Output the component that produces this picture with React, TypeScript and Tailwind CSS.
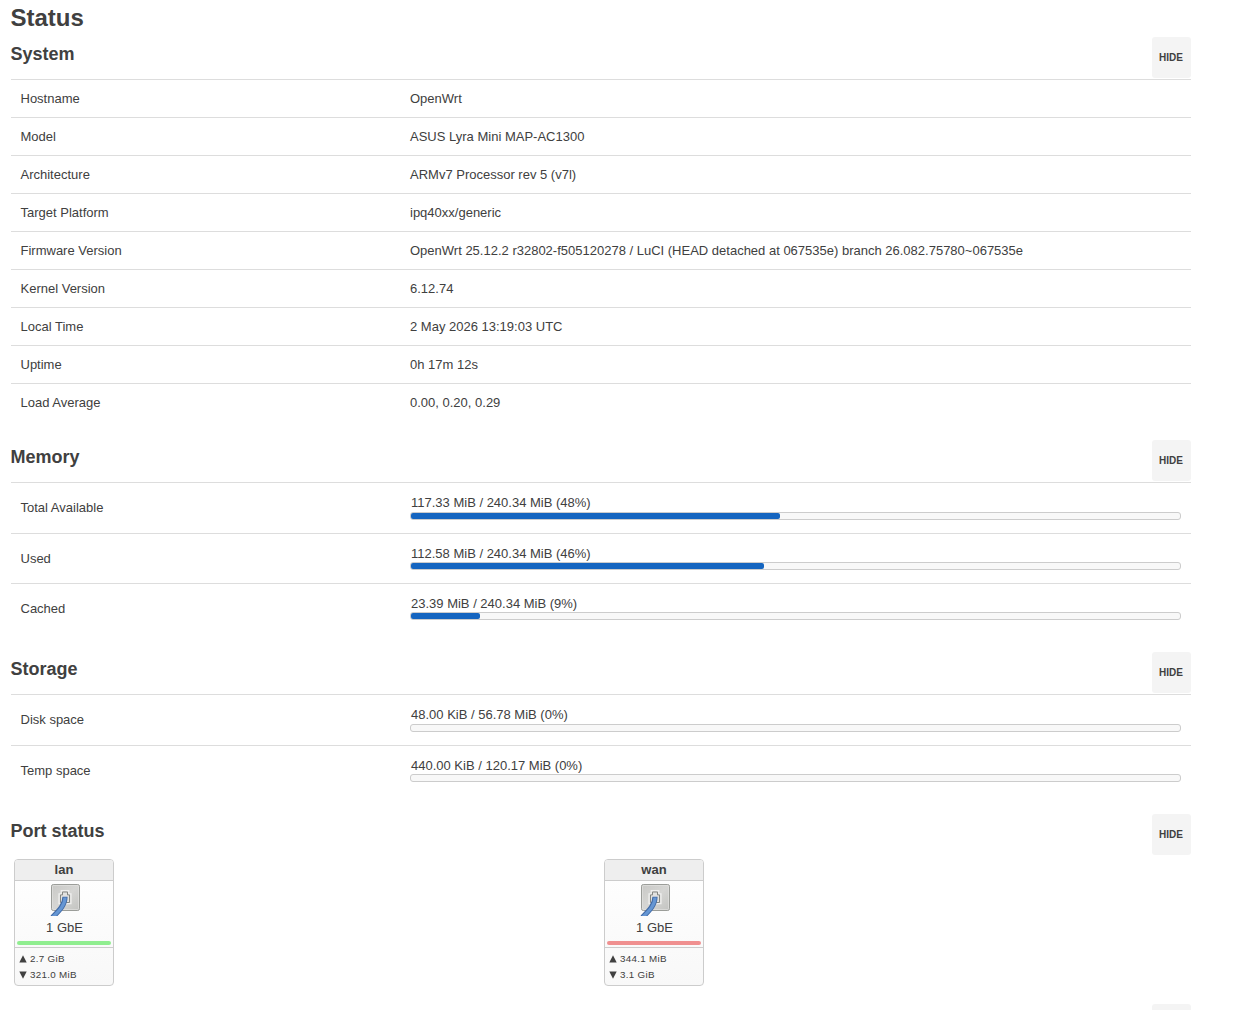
import React, { ReactNode } from "react";

const systemInfo = [
	["Hostname", "OpenWrt"],
	["Model", "ASUS Lyra Mini MAP-AC1300"],
	["Architecture", "ARMv7 Processor rev 5 (v7l)"],
	["Target Platform", "ipq40xx/generic"],
	[
		"Firmware Version",
		"OpenWrt 25.12.2 r32802-f505120278 / LuCI (HEAD detached at 067535e) branch 26.082.75780~067535e",
	],
	["Kernel Version", "6.12.74"],
	["Local Time", "2 May 2026 13:19:03 UTC"],
	["Uptime", "0h 17m 12s"],
	["Load Average", "0.00, 0.20, 0.29"],
];

const memory = [
	{ label: "Total Available", text: "117.33 MiB / 240.34 MiB (48%)", percent: 48 },
	{ label: "Used", text: "112.58 MiB / 240.34 MiB (46%)", percent: 46 },
	{ label: "Cached", text: "23.39 MiB / 240.34 MiB (9%)", percent: 9 },
];

const storage = [
	{ label: "Disk space", text: "48.00 KiB / 56.78 MiB (0%)", percent: 0 },
	{ label: "Temp space", text: "440.00 KiB / 120.17 MiB (0%)", percent: 0 },
];

const App = () => {
	return (
		<div className="h-[1010px] overflow-hidden bg-white pl-[11px] font-['Liberation_Sans',Arial,sans-serif] text-[13px] leading-[18px] text-[#404040]">
			<div className="w-[1180px]">
				<h2 className="-ml-[0.5px] h-[37px] text-[24px] leading-[36px] font-bold">
					Status
				</h2>
				<Section title="System">
					{systemInfo.map(([label, value]) => (
						<div
							key={label}
							className="flex h-[38px] items-center border-t border-[#ddd]"
						>
							<div className="w-[399px] pl-[9.5px]">{label}</div>
							<div>{value}</div>
						</div>
					))}
				</Section>
				<Section title="Memory">
					{memory.map((item) => (
						<UsageRow key={item.label} {...item} />
					))}
				</Section>
				<Section title="Storage">
					{storage.map((item) => (
						<UsageRow key={item.label} {...item} />
					))}
				</Section>
				<Section title="Port status">
					<div className="flex h-[129px] pt-[3px] pl-[3px]">
						<div className="w-[590px]">
							<Port name="lan" bar="bg-[#90ee90]" tx="2.7 GiB" rx="321.0 MiB" />
						</div>
						<Port name="wan" bar="bg-[#f09090]" tx="344.1 MiB" rx="3.1 GiB" />
					</div>
				</Section>
				{/* top edge of the next section's button */}
				<div className="flex justify-end">
					<div className="h-[6px] w-[39px] rounded-t-[3px] bg-[#f4f4f4]"></div>
				</div>
			</div>
		</div>
	);
};

const Section = ({ title, children }: { title: string; children: ReactNode }) => {
	return (
		<section className="mb-[19px]">
			<div className="flex h-[42px] items-start justify-between">
				<h3 className="-ml-[0.5px] text-[18px] leading-[34px] font-bold">
					{title}
				</h3>
				<button className="h-[41px] w-[39px] rounded-[3px] bg-[#f4f4f4] pr-px text-center text-[10px] font-bold">
					HIDE
				</button>
			</div>
			{children}
		</section>
	);
};

const UsageRow = ({
	label,
	text,
	percent,
}: {
	label: string;
	text: string;
	percent: number;
}) => {
	return (
		<div className="group flex h-[50px] border-t border-[#ddd] nth-2:h-[51px]">
			<div className="w-[399px] pt-[16px] pl-[9.5px]">{label}</div>
			<div className="w-[771px]">
				<div className="h-[28px] pt-[11px] pl-px group-nth-2:h-[29px]">
					{text}
				</div>
				<div className="h-2 rounded-[3px] border border-[#ccc] bg-[#f8f8f8]">
					<div
						className="h-full rounded-[2px] bg-[#1565c0]"
						style={{ width: `calc(${percent}% - 0.3px)` }}
					></div>
				</div>
			</div>
		</div>
	);
};

const Port = ({
	name,
	bar,
	tx,
	rx,
}: {
	name: string;
	bar: string;
	tx: string;
	rx: string;
}) => {
	return (
		<div className="h-[127px] w-[100px] rounded-[4px] border border-[#ccc] bg-linear-to-b from-white to-[#f8f8f8]">
			<div className="h-[21px] rounded-t-[3px] border-b border-[#ccc] bg-[#eee] text-center leading-[20px] font-bold">
				{name}
			</div>
			<div className="flex h-[67px] flex-col items-center border-b border-[#ccc] pt-[3px]">
				<PortIcon />
				<div className="h-[22px] pt-px pl-px leading-[22px]">1 GbE</div>
				<div className={`mt-[3px] h-1 w-[94px] rounded-[2px] ${bar}`}></div>
			</div>
			<div className="pt-[3px] pl-1 text-[9.8px] leading-[16px] tracking-[0.3px]">
				<div className="flex items-center gap-[3px]">
					<Arrow /> {tx}
				</div>
				<div className="flex items-center gap-[3px]">
					<Arrow down /> {rx}
				</div>
			</div>
		</div>
	);
};

const Arrow = ({ down }: { down?: boolean }) => {
	return (
		<svg width={8} height={8} viewBox="0 0 8 8">
			<path fill="#404040" d={down ? "M.3.5h7.4L4 7.7z" : "M4 .3 7.7 7.5H.3z"} />
		</svg>
	);
};

const PortIcon = () => {
	return (
		<svg className="ml-0.5" width={32} height={32} viewBox="0 0 32 32">
			<defs>
				<linearGradient id="plate" x1="0" y1="0" x2="1" y2="1">
					<stop offset="0" stopColor="#c8c8c5" />
					<stop offset=".5" stopColor="#d6d6d4" />
					<stop offset="1" stopColor="#c2c3c0" />
				</linearGradient>
			</defs>
			<rect
				x="2.5"
				y=".5"
				width="28"
				height="26"
				rx="1.8"
				fill="url(#plate)"
				stroke="#9b9d99"
			/>
			<rect
				x="3.5"
				y="1.5"
				width="26"
				height="24"
				rx="1"
				fill="none"
				stroke="#e4e4e2"
				strokeOpacity=".6"
			/>
			<path
				d="M10 19.7V9.8h2.2V6.7h7.6v3.1H22v9.9z"
				fill="#d6d6d4"
				stroke="#f0f0ef"
				strokeWidth="1.2"
			/>
			<path
				d="M11.5 18.5v-7.6h2V8h5v2.9h2v7.6z"
				fill="#e2e2e0"
				stroke="#858783"
			/>
			<path
				d="M16 12.8C16 21 10.5 26.5 3.4 33.4"
				fill="none"
				stroke="#416aa6"
				strokeWidth="5.2"
			/>
			<path
				d="M16 13.6C16 21.3 10.5 26.5 3.4 33.4"
				fill="none"
				stroke="#6596d3"
				strokeWidth="3.2"
			/>
		</svg>
	);
};

export default App;
